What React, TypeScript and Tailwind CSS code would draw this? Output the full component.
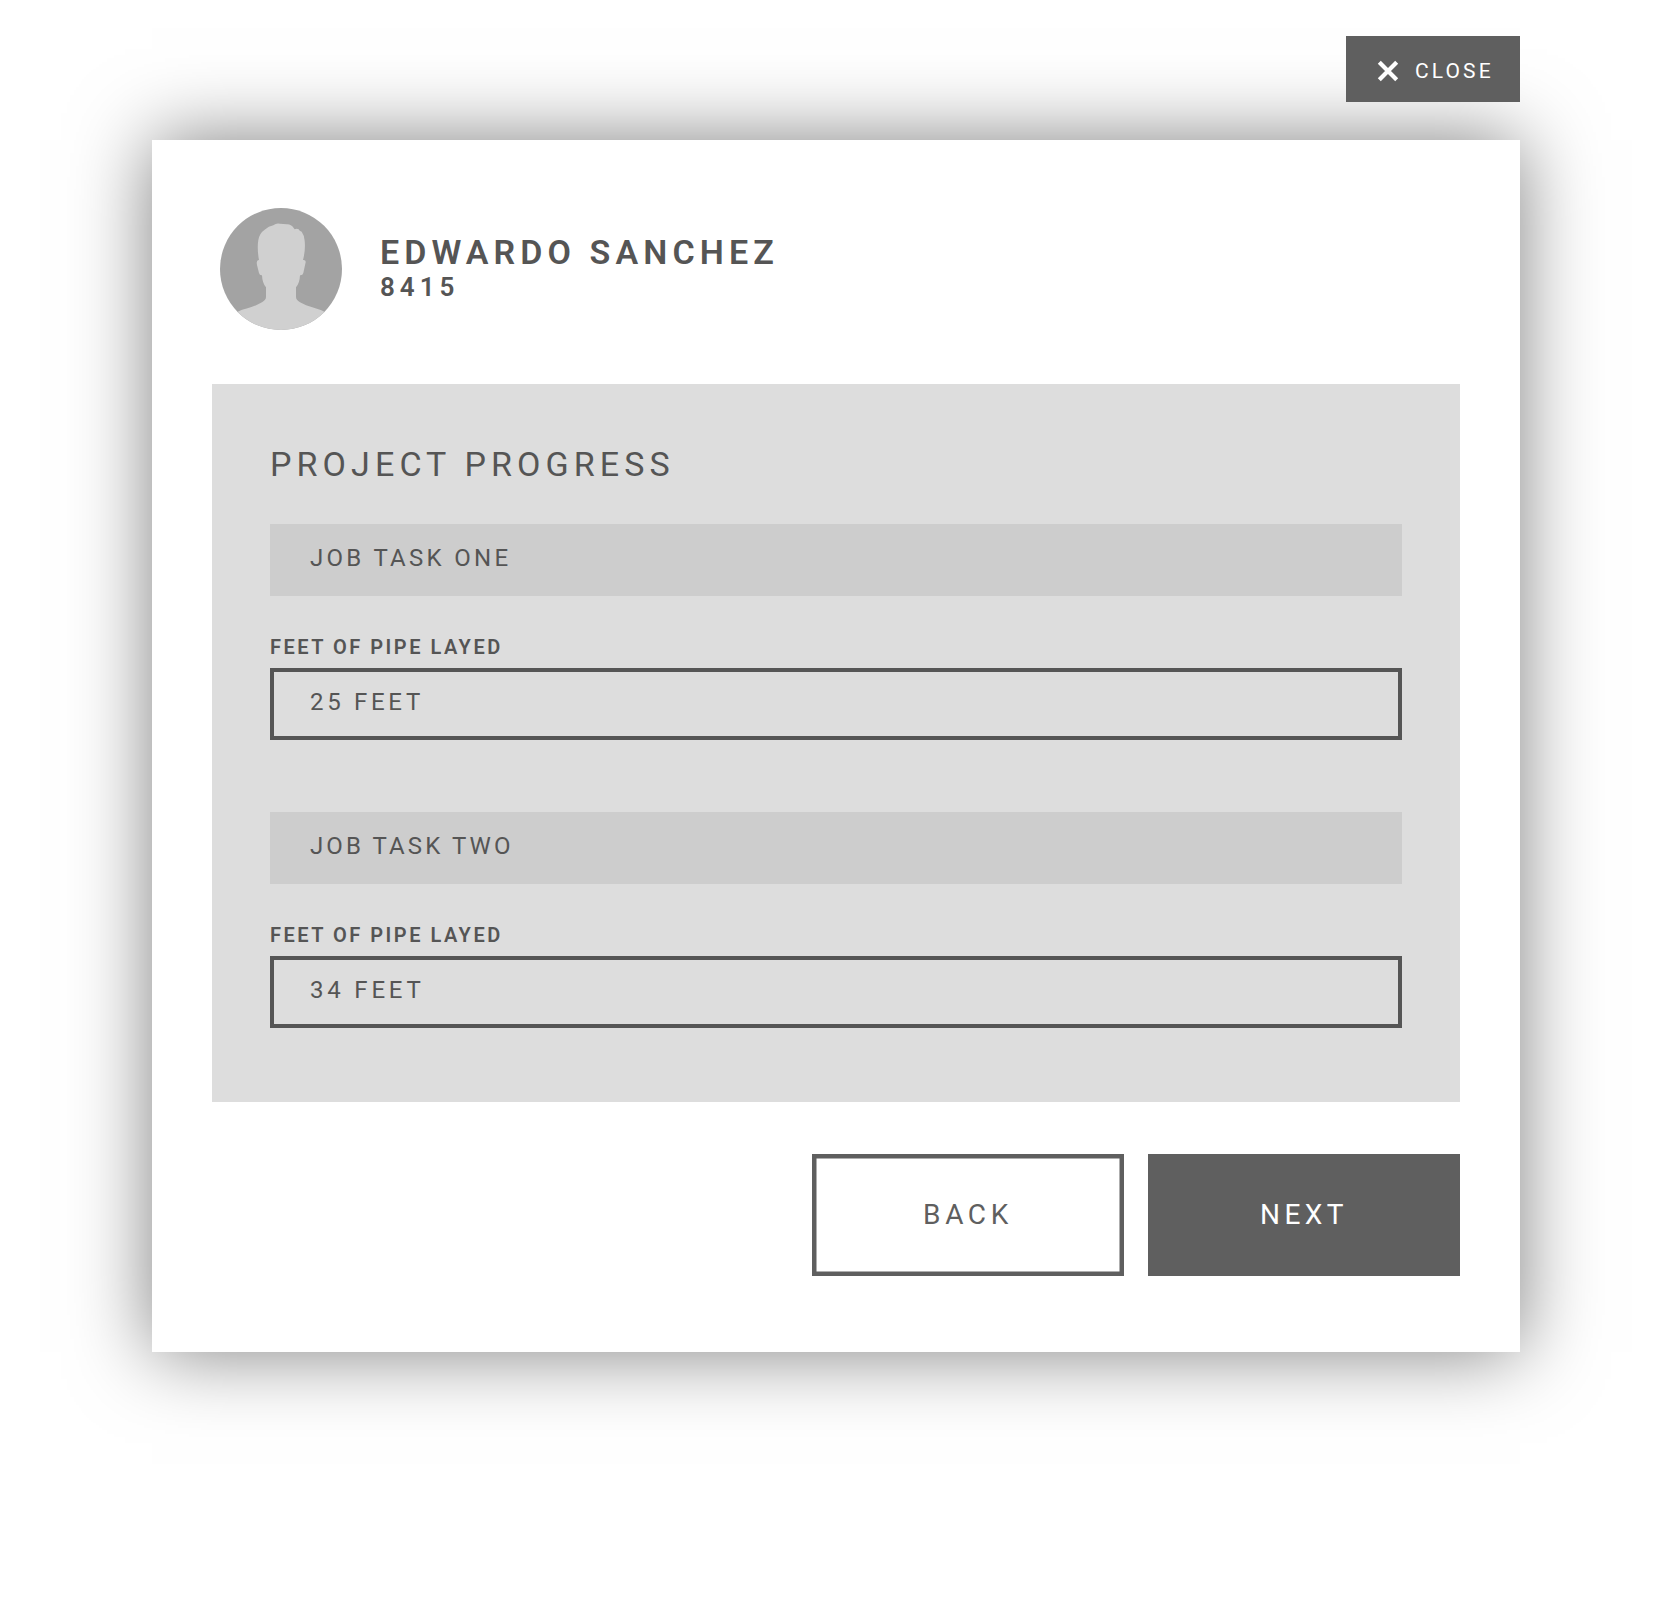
function CloseIcon() {
  return (
    <svg className="h-[22px] w-[22px]" viewBox="0 0 22 22" fill="none" stroke="currentColor" strokeWidth="4.2">
      <path d="M2.3 2.3 19.7 19.7M19.7 2.3 2.3 19.7" />
    </svg>
  );
}

function Avatar() {
  return (
    <svg className="h-[122px] w-[122px] rounded-full bg-[#a3a3a3]" viewBox="0 0 366 366">
      <path
        fill="#d0d0d0"
        d="M53 311C76 301 104 297 126 283Q138 276 138 267V238Q127 226 126 202Q119 203 117 195L111 171Q108 155 117 156C113 136 112 112 115 96Q118 76 134 65Q146 54 160 52Q169 44 180 47Q190 48 200 49Q213 48 221 60L224 64Q230 60 236 64Q238 70 245 71Q253 82 254 98Q257 126 249 156Q258 155 257 163L250 195Q248 203 240 202Q239 226 228 238V267Q228 276 240 283C264 297 290 300 313 311V366H53Z"
      />
    </svg>
  );
}

function TaskBar({ label, className }: { label: string; className: string }) {
  return (
    <div className="flex h-[72px] items-center bg-[#cdcdcd] pb-1 pl-10">
      <span className={`text-[24px] leading-7 ${className}`}>{label}</span>
    </div>
  );
}

function Field({ value, className }: { value: string; className: string }) {
  return (
    <label className="block pt-[39px]">
      <span className="mb-[9px] block text-[20px] leading-6 font-semibold tracking-[2.5px]">FEET OF PIPE LAYED</span>
      <span className="flex h-[72px] items-center border-4 border-[#555] pb-1 pl-9">
        <span className={`text-[24px] leading-7 ${className}`}>{value}</span>
      </span>
    </label>
  );
}

export default function App() {
  return (
    <div className="h-[1600px] w-[1670px] overflow-hidden bg-white pr-[150px] pl-[152px] font-[Roboto,sans-serif] text-[#555]">
      <div className="relative z-10 flex justify-end pt-9">
        <button className="flex h-[66px] w-[174px] items-center bg-[#5f5f5f] pt-1 pl-[31px] text-white">
          <CloseIcon />
          <span className="ml-4 text-[21px] leading-6 tracking-[3.1px]">CLOSE</span>
        </button>
      </div>
      <main className="mt-[38px] h-[1212px] bg-white px-[60px] pt-[68px] shadow-[0_0_75px_rgba(0,0,0,0.5)]">
        <header className="flex pl-2">
          <Avatar />
          <div className="pt-6 pl-[38px] font-semibold">
            <h1 className="text-[34px] leading-10 tracking-[5.1px]">EDWARDO SANCHEZ</h1>
            <p className="text-[26px] leading-[30px] tracking-[5px]">8415</p>
          </div>
        </header>
        <section className="mt-[54px] h-[718px] bg-[#ddd] px-[58px] pt-[60px]">
          <h2 className="mb-10 text-[34px] leading-10 tracking-[5.1px]">PROJECT PROGRESS</h2>
          <div className="flex flex-col gap-[72px]">
            <div>
              <TaskBar label="JOB TASK ONE" className="tracking-[3.3px]" />
              <Field value="25 FEET" className="tracking-[3.7px]" />
            </div>
            <div>
              <TaskBar label="JOB TASK TWO" className="tracking-[3.1px]" />
              <Field value="34 FEET" className="tracking-[3.8px]" />
            </div>
          </div>
        </section>
        <footer className="mt-[52px] flex justify-end gap-6">
          <button className="h-[122px] w-[312px] text-[28px] tracking-[4.6px] text-[#5f5f5f] shadow-[inset_0_0_0_4.5px_#5f5f5f]">
            BACK
          </button>
          <button className="h-[122px] w-[312px] bg-[#5f5f5f] text-[28px] tracking-[4.5px] text-white">NEXT</button>
        </footer>
      </main>
    </div>
  );
}
